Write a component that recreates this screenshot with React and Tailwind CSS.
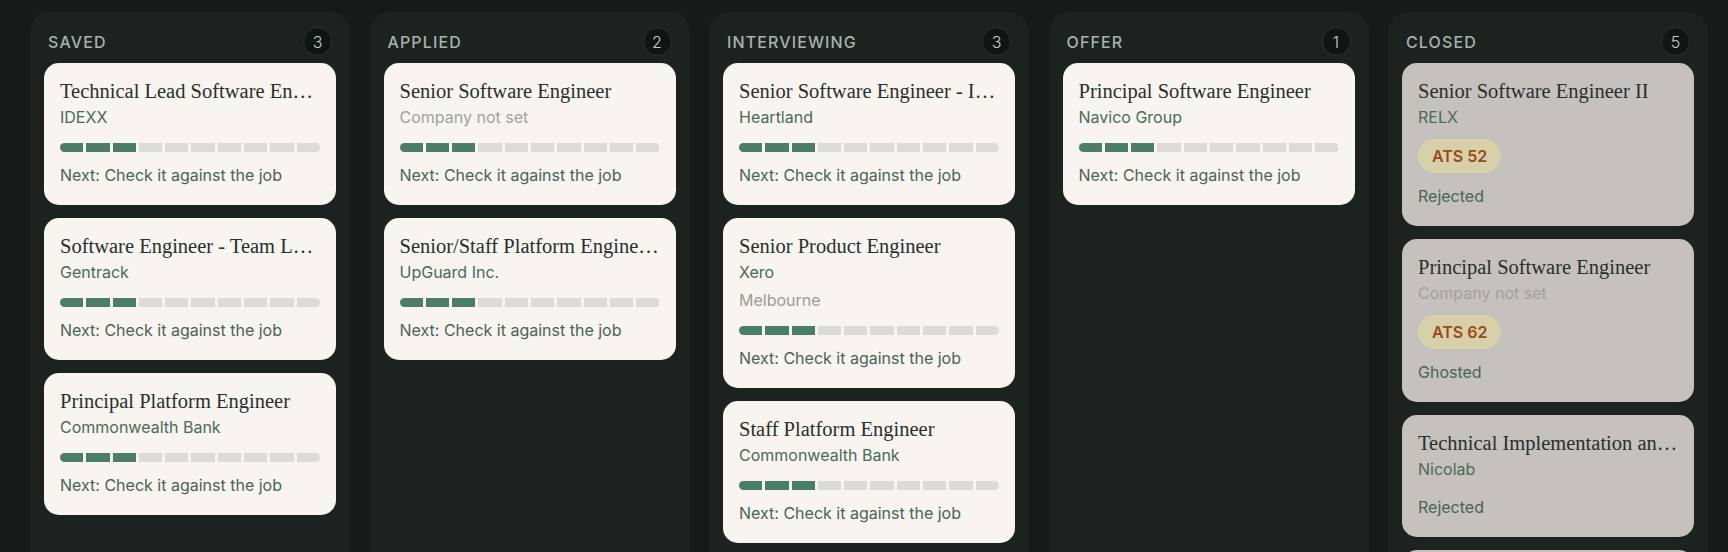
const SANS = { fontFamily: 'Inter, "Liberation Sans", sans-serif' }

const columns = [
  {
    name: 'Saved',
    jobs: [
      { title: 'Technical Lead Software Engineer', company: 'IDEXX' },
      { title: 'Software Engineer - Team Lead', company: 'Gentrack' },
      { title: 'Principal Platform Engineer', company: 'Commonwealth Bank' },
    ],
  },
  {
    name: 'Applied',
    jobs: [
      { title: 'Senior Software Engineer', company: null },
      { title: 'Senior/Staff Platform Engineer (Cloud)', company: 'UpGuard Inc.' },
    ],
  },
  {
    name: 'Interviewing',
    jobs: [
      { title: 'Senior Software Engineer - Infrastructure', company: 'Heartland' },
      { title: 'Senior Product Engineer', company: 'Xero', location: 'Melbourne' },
      { title: 'Staff Platform Engineer', company: 'Commonwealth Bank' },
    ],
  },
  {
    name: 'Offer',
    jobs: [{ title: 'Principal Software Engineer', company: 'Navico Group' }],
  },
  {
    name: 'Closed',
    closed: true,
    count: 5,
    jobs: [
      { title: 'Senior Software Engineer II', company: 'RELX', ats: 52, status: 'Rejected' },
      { title: 'Principal Software Engineer', company: null, ats: 62, status: 'Ghosted' },
      { title: 'Technical Implementation and Integration Lead', company: 'Nicolab', status: 'Rejected' },
      { title: 'Software Engineer', company: 'Atlassian', status: 'Rejected' },
    ],
  },
]

function Progress({ done = 3, total = 10 }) {
  return (
    <div className="mt-[14px] flex h-[9px] gap-[3px] overflow-hidden rounded-full">
      {Array.from({ length: total }).map((_, i) => (
        <div key={i} className={`flex-1 ${i < done ? 'bg-[#4b7d68]' : 'bg-[#dcdbd9]'}`} />
      ))}
    </div>
  )
}

function JobCard({ job, closed }) {
  return (
    <div className={`rounded-[15px] px-4 pt-4 pb-[18px] ${closed ? 'bg-[#c5c1bd]' : 'bg-[#f8f4f0]'}`}>
      <div
        className="truncate text-[20.5px] leading-6 text-[#29302c]"
        style={{ fontFamily: '"Liberation Serif", serif' }}
      >
        {job.title}
      </div>
      <div
        className={`mt-[2px] text-[16px] leading-6 ${job.company ? 'text-[#4b6a5a]' : 'text-[#a3a29f]'}`}
        style={SANS}
      >
        {job.company || 'Company not set'}
      </div>
      {job.location && (
        <div className="mt-[4px] text-[16px] leading-6 text-[#9c9b98]" style={SANS}>
          {job.location}
        </div>
      )}
      {closed ? (
        <>
          {job.ats && (
            <div className="mt-[10px] flex">
              <span
                className="rounded-full bg-[#d8d0a8] px-[14px] py-[6px] text-[16px] font-semibold leading-[22px] text-[#9a4a1c]"
                style={SANS}
              >
                ATS {job.ats}
              </span>
            </div>
          )}
          <div className={`${job.ats ? 'mt-[11px]' : 'mt-[14px]'} text-[16px] leading-6 text-[#4b6357]`} style={SANS}>
            {job.status}
          </div>
        </>
      ) : (
        <>
          <Progress />
          <div className="mt-[11px] text-[16px] leading-6 text-[#4b6357]" style={SANS}>
            Next: Check it against the job
          </div>
        </>
      )}
    </div>
  )
}

export default function App() {
  return (
    <div className="h-[552px] overflow-hidden bg-[#161b19] pl-[30px] pr-[20px] pt-[12px]">
      <div className="grid grid-cols-5 gap-[19.5px]">
        {columns.map((col) => (
          <div key={col.name} className="h-[620px] rounded-[20px] bg-[#1c2220] px-[14px] pt-[15px]">
            <div className="mb-[7px] flex items-center justify-between px-[4px]">
              <span
                className="text-[16px] font-medium uppercase tracking-[0.07em] text-[#a7b3ac]"
                style={SANS}
              >
                {col.name}
              </span>
              <span
                className="flex h-[29px] w-[29px] items-center justify-center rounded-full border border-[#2b322f] bg-[#101513] text-[16px] font-light text-[#c7cfca]"
                style={SANS}
              >
                {col.count ?? col.jobs.length}
              </span>
            </div>
            <div className="flex flex-col gap-[13px]">
              {col.jobs.map((job, i) => (
                <JobCard key={i} job={job} closed={col.closed} />
              ))}
            </div>
          </div>
        ))}
      </div>
    </div>
  )
}
